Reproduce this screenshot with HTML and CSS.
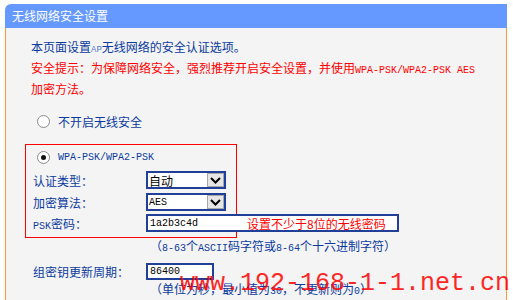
FILE: index.html
```html
<!DOCTYPE html>
<html lang="zh">
<head>
<meta charset="utf-8">
<title>无线网络安全设置</title>
<link rel="stylesheet" href="styles.css">
</head>
<body>
<div class="panel">
  <div class="header">无线网络安全设置</div>
  <div class="body">
    <div class="intro">
      <div class="blue">本页面设置<span class="mono ap">AP</span>无线网络的安全认证选项。</div>
      <div class="red">安全提示：为保障网络安全，强烈推荐开启安全设置，并使用<span class="mono">WPA-PSK/WPA2-PSK AES</span></div>
      <div class="red">加密方法。</div>
    </div>
    <div class="opt opt-none"><span class="radio"></span><span class="blue">不开启无线安全</span></div>
    <div class="wpa-box">
      <div class="opt opt-wpa"><span class="radio checked"></span><span class="mono blue">WPA-PSK/WPA2-PSK</span></div>
      <div class="field f1"><span class="label">认证类型：</span>
        <div class="select"><span class="sel-text">自动</span><span class="arrow"><svg width="11" height="7" viewBox="0 0 11 7"><path d="M1 1 L5.5 5.5 L10 1" fill="none" stroke="#000" stroke-width="2"/></svg></span></div>
      </div>
      <div class="field f2"><span class="label">加密算法：</span>
        <div class="select"><span class="sel-text mono">AES</span><span class="arrow"><svg width="11" height="7" viewBox="0 0 11 7"><path d="M1 1 L5.5 5.5 L10 1" fill="none" stroke="#000" stroke-width="2"/></svg></span></div>
      </div>
      <div class="field f3"><span class="label"><span class="mono">PSK</span>密码：</span>
        <div class="psk"><span class="psk-val mono">1a2b3c4d</span><span class="hint">设置不少于8位的无线密码</span></div>
      </div>
    </div>
    <div class="note note-psk">（<span class="mono">8-63</span>个<span class="mono">ASCII</span>码字符或<span class="mono">8-64</span>个十六进制字符）</div>
    <div class="field f4"><span class="label">组密钥更新周期：</span>
      <div class="input"><span class="mono">86400</span></div>
    </div>
    <div class="note note-period">（单位为秒，最小值为<span class="mono">30</span>，不更新则为<span class="mono">0</span>）</div>
  </div>
</div>
<div class="watermark">www.192-168-1-1.net.cn</div>
</body>
</html>
```
FILE: styles.css
```css
html, body {
  margin: 0;
  padding: 0;
  background: #ffffff;
  height: 300px;
  overflow: hidden;
}
body {
  font-family: "Noto Sans CJK SC", "Noto Sans", sans-serif;
  font-size: 12px;
  color: #0b3a9f;
  position: relative;
}
.panel {
  margin: 4px 0 0 5px;
  width: 502px;
}
.header {
  height: 24px;
  line-height: 24px;
  background: #6699ff;
  color: #ffffff;
  padding-left: 7px;
  border-top-left-radius: 6px;
  font-size: 12px;
}
.body {
  background: #f4f4f4;
  border-left: 1px solid #ff9933;
  border-right: 1px solid #ff9933;
  height: 272px;
}
.mono {
  font-family: "Liberation Mono", "DejaVu Sans Mono", monospace;
  font-size: 10px;
}
.ap {
  font-size: 9px;
  color: #5577cc;
}
.blue { color: #0b3a9f; }
.red { color: #ff0000; }
.intro {
  padding: 10px 0 0 25px;
  line-height: 18px;
}
.opt {
  display: flex;
  align-items: center;
  height: 18px;
  gap: 8px;
}
.opt-none {
  margin-top: 14px;
  padding-left: 31px;
}
.radio {
  width: 11px;
  height: 11px;
  border: 1px solid #8a8a8a;
  border-radius: 50%;
  background: #ffffff;
  display: flex;
  align-items: center;
  justify-content: center;
  flex: none;
}
.radio.checked::after {
  content: "";
  width: 5px;
  height: 5px;
  border-radius: 50%;
  background: #111111;
}
.wpa-box {
  margin: 14px 0 0 19px;
  width: 203px;
  border: 1px solid #ff0000;
  padding: 3px 0 5px 7px;
}
.opt-wpa {
  margin-left: 4px;
}
.field {
  display: flex;
  align-items: center;
}
.label {
  width: 113px;
  flex: none;
}
.f1 { height: 18px; margin-top: 5px; }
.f2 { height: 18px; margin-top: 4px; }
.f3 { height: 18px; margin-top: 3px; }
.select {
  box-sizing: border-box;
  flex: none;
  width: 80px;
  height: 18px;
  border: 2px solid #1f3f99;
  background: #ffffff;
  display: flex;
  align-items: center;
  justify-content: space-between;
  color: #000000;
}
.sel-text {
  padding-left: 1px;
}
.arrow {
  box-sizing: border-box;
  width: 17px;
  height: 14px;
  background: #e6e6e6;
  border: 1px solid #a8a8a8;
  display: flex;
  align-items: center;
  justify-content: center;
}
.psk {
  box-sizing: border-box;
  flex: none;
  width: 253px;
  height: 18px;
  border: 2px solid #1f3f99;
  background: #ffffff;
  display: flex;
  align-items: center;
  color: #000000;
}
.psk-val {
  width: 97px;
  padding-left: 2px;
  flex: none;
}
.hint {
  color: #ff0000;
  white-space: nowrap;
}
.note {
  line-height: 16px;
  padding-left: 144px;
  white-space: nowrap;
}
.f4 {
  margin-top: 6px;
  height: 17px;
  padding-left: 27px;
}
.input {
  box-sizing: border-box;
  flex: none;
  width: 68px;
  height: 17px;
  border: 2px solid #1f3f99;
  background: #ffffff;
  display: flex;
  align-items: center;
  padding-left: 2px;
  color: #000000;
}
.note-period {
  margin-top: 1px;
}
.watermark {
  position: absolute;
  left: 180px;
  top: 271px;
  font-family: "Liberation Mono", monospace;
  font-size: 25px;
  line-height: 25px;
  color: #ff0000;
  opacity: 0.85;
  white-space: nowrap;
}
```
